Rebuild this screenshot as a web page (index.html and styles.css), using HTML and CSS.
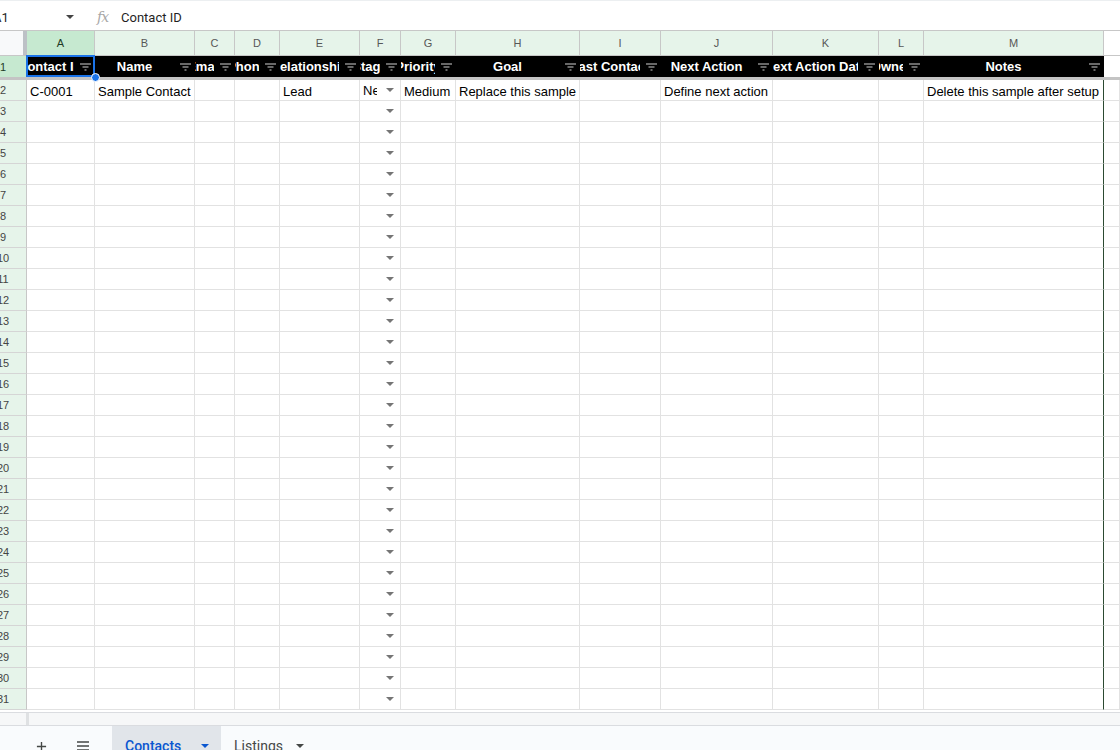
FILE: index.html
```html
<!DOCTYPE html>
<html>
<head>
<meta charset="utf-8">
<title>Contacts</title>
<link rel="stylesheet" href="styles.css">
</head>
<body>
<div class="app">
  <div class="fbar">
    <span class="namebox">A1</span>
    <i class="nb-caret"></i>
    <span class="fx">fx</span>
    <span class="formula">Contact ID</span>
  </div>

  <div class="sheet">
    <div class="row colhdr">
      <div class="corner"></div>
      <div class="ch sel-col">A</div><div class="ch">B</div><div class="ch">C</div><div class="ch">D</div><div class="ch">E</div><div class="ch">F</div><div class="ch">G</div><div class="ch">H</div><div class="ch">I</div><div class="ch">J</div><div class="ch">K</div><div class="ch">L</div><div class="ch">M</div><div class="ch blank"></div>
    </div>

    <div class="row hdr">
      <div class="rh sel-row">1</div>
      <div class="h sel"><span class="ht">Contact ID</span><svg class="fi" viewBox="0 0 11 8"><path d="M0 1h11M2.5 4h6M4.5 7h2"/></svg></div>
      <div class="h"><span class="ht">Name</span><svg class="fi" viewBox="0 0 11 8"><path d="M0 1h11M2.5 4h6M4.5 7h2"/></svg></div>
      <div class="h"><span class="ht">Email</span><svg class="fi" viewBox="0 0 11 8"><path d="M0 1h11M2.5 4h6M4.5 7h2"/></svg></div>
      <div class="h"><span class="ht">Phone</span><svg class="fi" viewBox="0 0 11 8"><path d="M0 1h11M2.5 4h6M4.5 7h2"/></svg></div>
      <div class="h"><span class="ht">Relationship</span><svg class="fi" viewBox="0 0 11 8"><path d="M0 1h11M2.5 4h6M4.5 7h2"/></svg></div>
      <div class="h"><span class="ht">Stage</span><svg class="fi" viewBox="0 0 11 8"><path d="M0 1h11M2.5 4h6M4.5 7h2"/></svg></div>
      <div class="h"><span class="ht">Priority</span><svg class="fi" viewBox="0 0 11 8"><path d="M0 1h11M2.5 4h6M4.5 7h2"/></svg></div>
      <div class="h"><span class="ht">Goal</span><svg class="fi" viewBox="0 0 11 8"><path d="M0 1h11M2.5 4h6M4.5 7h2"/></svg></div>
      <div class="h"><span class="ht">Last Contact</span><svg class="fi" viewBox="0 0 11 8"><path d="M0 1h11M2.5 4h6M4.5 7h2"/></svg></div>
      <div class="h"><span class="ht">Next Action</span><svg class="fi" viewBox="0 0 11 8"><path d="M0 1h11M2.5 4h6M4.5 7h2"/></svg></div>
      <div class="h"><span class="ht">Next Action Date</span><svg class="fi" viewBox="0 0 11 8"><path d="M0 1h11M2.5 4h6M4.5 7h2"/></svg></div>
      <div class="h"><span class="ht">Owner</span><svg class="fi" viewBox="0 0 11 8"><path d="M0 1h11M2.5 4h6M4.5 7h2"/></svg></div>
      <div class="h"><span class="ht">Notes</span><svg class="fi" viewBox="0 0 11 8"><path d="M0 1h11M2.5 4h6M4.5 7h2"/></svg></div>
      <div class="h blank"></div>
    </div>

    <div class="row"><div class="rh">2</div><div class="c">C-0001</div><div class="c">Sample Contact</div><div class="c"></div><div class="c"></div><div class="c">Lead</div><div class="c dd"><span class="dt">New</span></div><div class="c">Medium</div><div class="c">Replace this sample text</div><div class="c"></div><div class="c">Define next action</div><div class="c"></div><div class="c"></div><div class="c m">Delete this sample after setup</div><div class="c"></div></div>
    <div class="row"><div class="rh">3</div><div class="c"></div><div class="c"></div><div class="c"></div><div class="c"></div><div class="c"></div><div class="c dd"></div><div class="c"></div><div class="c"></div><div class="c"></div><div class="c"></div><div class="c"></div><div class="c"></div><div class="c m"></div><div class="c"></div></div>
    <div class="row"><div class="rh">4</div><div class="c"></div><div class="c"></div><div class="c"></div><div class="c"></div><div class="c"></div><div class="c dd"></div><div class="c"></div><div class="c"></div><div class="c"></div><div class="c"></div><div class="c"></div><div class="c"></div><div class="c m"></div><div class="c"></div></div>
    <div class="row"><div class="rh">5</div><div class="c"></div><div class="c"></div><div class="c"></div><div class="c"></div><div class="c"></div><div class="c dd"></div><div class="c"></div><div class="c"></div><div class="c"></div><div class="c"></div><div class="c"></div><div class="c"></div><div class="c m"></div><div class="c"></div></div>
    <div class="row"><div class="rh">6</div><div class="c"></div><div class="c"></div><div class="c"></div><div class="c"></div><div class="c"></div><div class="c dd"></div><div class="c"></div><div class="c"></div><div class="c"></div><div class="c"></div><div class="c"></div><div class="c"></div><div class="c m"></div><div class="c"></div></div>
    <div class="row"><div class="rh">7</div><div class="c"></div><div class="c"></div><div class="c"></div><div class="c"></div><div class="c"></div><div class="c dd"></div><div class="c"></div><div class="c"></div><div class="c"></div><div class="c"></div><div class="c"></div><div class="c"></div><div class="c m"></div><div class="c"></div></div>
    <div class="row"><div class="rh">8</div><div class="c"></div><div class="c"></div><div class="c"></div><div class="c"></div><div class="c"></div><div class="c dd"></div><div class="c"></div><div class="c"></div><div class="c"></div><div class="c"></div><div class="c"></div><div class="c"></div><div class="c m"></div><div class="c"></div></div>
    <div class="row"><div class="rh">9</div><div class="c"></div><div class="c"></div><div class="c"></div><div class="c"></div><div class="c"></div><div class="c dd"></div><div class="c"></div><div class="c"></div><div class="c"></div><div class="c"></div><div class="c"></div><div class="c"></div><div class="c m"></div><div class="c"></div></div>
    <div class="row"><div class="rh">10</div><div class="c"></div><div class="c"></div><div class="c"></div><div class="c"></div><div class="c"></div><div class="c dd"></div><div class="c"></div><div class="c"></div><div class="c"></div><div class="c"></div><div class="c"></div><div class="c"></div><div class="c m"></div><div class="c"></div></div>
    <div class="row"><div class="rh">11</div><div class="c"></div><div class="c"></div><div class="c"></div><div class="c"></div><div class="c"></div><div class="c dd"></div><div class="c"></div><div class="c"></div><div class="c"></div><div class="c"></div><div class="c"></div><div class="c"></div><div class="c m"></div><div class="c"></div></div>
    <div class="row"><div class="rh">12</div><div class="c"></div><div class="c"></div><div class="c"></div><div class="c"></div><div class="c"></div><div class="c dd"></div><div class="c"></div><div class="c"></div><div class="c"></div><div class="c"></div><div class="c"></div><div class="c"></div><div class="c m"></div><div class="c"></div></div>
    <div class="row"><div class="rh">13</div><div class="c"></div><div class="c"></div><div class="c"></div><div class="c"></div><div class="c"></div><div class="c dd"></div><div class="c"></div><div class="c"></div><div class="c"></div><div class="c"></div><div class="c"></div><div class="c"></div><div class="c m"></div><div class="c"></div></div>
    <div class="row"><div class="rh">14</div><div class="c"></div><div class="c"></div><div class="c"></div><div class="c"></div><div class="c"></div><div class="c dd"></div><div class="c"></div><div class="c"></div><div class="c"></div><div class="c"></div><div class="c"></div><div class="c"></div><div class="c m"></div><div class="c"></div></div>
    <div class="row"><div class="rh">15</div><div class="c"></div><div class="c"></div><div class="c"></div><div class="c"></div><div class="c"></div><div class="c dd"></div><div class="c"></div><div class="c"></div><div class="c"></div><div class="c"></div><div class="c"></div><div class="c"></div><div class="c m"></div><div class="c"></div></div>
    <div class="row"><div class="rh">16</div><div class="c"></div><div class="c"></div><div class="c"></div><div class="c"></div><div class="c"></div><div class="c dd"></div><div class="c"></div><div class="c"></div><div class="c"></div><div class="c"></div><div class="c"></div><div class="c"></div><div class="c m"></div><div class="c"></div></div>
    <div class="row"><div class="rh">17</div><div class="c"></div><div class="c"></div><div class="c"></div><div class="c"></div><div class="c"></div><div class="c dd"></div><div class="c"></div><div class="c"></div><div class="c"></div><div class="c"></div><div class="c"></div><div class="c"></div><div class="c m"></div><div class="c"></div></div>
    <div class="row"><div class="rh">18</div><div class="c"></div><div class="c"></div><div class="c"></div><div class="c"></div><div class="c"></div><div class="c dd"></div><div class="c"></div><div class="c"></div><div class="c"></div><div class="c"></div><div class="c"></div><div class="c"></div><div class="c m"></div><div class="c"></div></div>
    <div class="row"><div class="rh">19</div><div class="c"></div><div class="c"></div><div class="c"></div><div class="c"></div><div class="c"></div><div class="c dd"></div><div class="c"></div><div class="c"></div><div class="c"></div><div class="c"></div><div class="c"></div><div class="c"></div><div class="c m"></div><div class="c"></div></div>
    <div class="row"><div class="rh">20</div><div class="c"></div><div class="c"></div><div class="c"></div><div class="c"></div><div class="c"></div><div class="c dd"></div><div class="c"></div><div class="c"></div><div class="c"></div><div class="c"></div><div class="c"></div><div class="c"></div><div class="c m"></div><div class="c"></div></div>
    <div class="row"><div class="rh">21</div><div class="c"></div><div class="c"></div><div class="c"></div><div class="c"></div><div class="c"></div><div class="c dd"></div><div class="c"></div><div class="c"></div><div class="c"></div><div class="c"></div><div class="c"></div><div class="c"></div><div class="c m"></div><div class="c"></div></div>
    <div class="row"><div class="rh">22</div><div class="c"></div><div class="c"></div><div class="c"></div><div class="c"></div><div class="c"></div><div class="c dd"></div><div class="c"></div><div class="c"></div><div class="c"></div><div class="c"></div><div class="c"></div><div class="c"></div><div class="c m"></div><div class="c"></div></div>
    <div class="row"><div class="rh">23</div><div class="c"></div><div class="c"></div><div class="c"></div><div class="c"></div><div class="c"></div><div class="c dd"></div><div class="c"></div><div class="c"></div><div class="c"></div><div class="c"></div><div class="c"></div><div class="c"></div><div class="c m"></div><div class="c"></div></div>
    <div class="row"><div class="rh">24</div><div class="c"></div><div class="c"></div><div class="c"></div><div class="c"></div><div class="c"></div><div class="c dd"></div><div class="c"></div><div class="c"></div><div class="c"></div><div class="c"></div><div class="c"></div><div class="c"></div><div class="c m"></div><div class="c"></div></div>
    <div class="row"><div class="rh">25</div><div class="c"></div><div class="c"></div><div class="c"></div><div class="c"></div><div class="c"></div><div class="c dd"></div><div class="c"></div><div class="c"></div><div class="c"></div><div class="c"></div><div class="c"></div><div class="c"></div><div class="c m"></div><div class="c"></div></div>
    <div class="row"><div class="rh">26</div><div class="c"></div><div class="c"></div><div class="c"></div><div class="c"></div><div class="c"></div><div class="c dd"></div><div class="c"></div><div class="c"></div><div class="c"></div><div class="c"></div><div class="c"></div><div class="c"></div><div class="c m"></div><div class="c"></div></div>
    <div class="row"><div class="rh">27</div><div class="c"></div><div class="c"></div><div class="c"></div><div class="c"></div><div class="c"></div><div class="c dd"></div><div class="c"></div><div class="c"></div><div class="c"></div><div class="c"></div><div class="c"></div><div class="c"></div><div class="c m"></div><div class="c"></div></div>
    <div class="row"><div class="rh">28</div><div class="c"></div><div class="c"></div><div class="c"></div><div class="c"></div><div class="c"></div><div class="c dd"></div><div class="c"></div><div class="c"></div><div class="c"></div><div class="c"></div><div class="c"></div><div class="c"></div><div class="c m"></div><div class="c"></div></div>
    <div class="row"><div class="rh">29</div><div class="c"></div><div class="c"></div><div class="c"></div><div class="c"></div><div class="c"></div><div class="c dd"></div><div class="c"></div><div class="c"></div><div class="c"></div><div class="c"></div><div class="c"></div><div class="c"></div><div class="c m"></div><div class="c"></div></div>
    <div class="row"><div class="rh">30</div><div class="c"></div><div class="c"></div><div class="c"></div><div class="c"></div><div class="c"></div><div class="c dd"></div><div class="c"></div><div class="c"></div><div class="c"></div><div class="c"></div><div class="c"></div><div class="c"></div><div class="c m"></div><div class="c"></div></div>
    <div class="row"><div class="rh">31</div><div class="c"></div><div class="c"></div><div class="c"></div><div class="c"></div><div class="c"></div><div class="c dd"></div><div class="c"></div><div class="c"></div><div class="c"></div><div class="c"></div><div class="c"></div><div class="c"></div><div class="c m"></div><div class="c"></div></div>
  </div>

  <div class="hscroll"><span class="hs-handle"></span></div>

  <div class="tabs">
    <span class="tb-btn add"><svg viewBox="0 0 12 12"><path d="M6 1v10M1 6h10"/></svg></span>
    <span class="tb-btn list"><svg viewBox="0 0 14 10"><path d="M1 1h12M1 5h12M1 9h12"/></svg></span>
    <span class="tab active">Contacts<i class="tab-caret"></i></span>
    <span class="tab">Listings<i class="tab-caret"></i></span>
  </div>
</div>
</body>
</html>
```

FILE: styles.css
```css
html, body {
  margin: 0;
  padding: 0;
  background: #fff;
}

.app {
  width: 1120px;
  height: 750px;
  overflow: hidden;
  font-family: "Liberation Sans", Arial, sans-serif;
  color: #000;
}

/* formula bar */
.fbar {
  display: flex;
  align-items: center;
  box-sizing: border-box;
  height: 31px;
  padding-top: 3px;
  border-top: 1px solid #eceff1;
  border-bottom: 1px solid #c7c7c7;
  font-family: Roboto, "Liberation Sans", sans-serif;
  font-size: 13px;
  color: #1f1f1f;
}

.namebox {
  margin-left: -7px;
  width: 73px;
}

.nb-caret {
  width: 0;
  height: 0;
  border-left: 4px solid transparent;
  border-right: 4px solid transparent;
  border-top: 4px solid #444;
}

.fx {
  margin-left: 23px;
  width: 24px;
  font-family: "DejaVu Serif", serif;
  font-style: italic;
  font-size: 14px;
  color: #a8a8a8;
  letter-spacing: -1px;
}

/* grid */
.sheet {
  margin-left: -20px;
  width: 1140px;
}

.row {
  display: grid;
  grid-template-columns: 47px 68px 100px 40px 45px 80px 41px 55px 124px 81px 112px 106px 45px 180px 1fr;
  height: 21px;
}

.row > div {
  box-sizing: border-box;
  min-width: 0;
}

.colhdr {
  height: 25px;
}

.corner {
  background: #f8f9fa;
  border-right: 4px solid #bdc1c6;
  border-bottom: 1px solid #c7c7c7;
}

.ch {
  background: #e6f4ea;
  border-right: 1px solid #c7c7c7;
  border-bottom: 1px solid #c7c7c7;
  display: flex;
  align-items: center;
  justify-content: center;
  font-size: 11px;
  color: #575757;
}

.ch.sel-col {
  background: #c6e9d0;
  color: #1f3b26;
}

.ch.blank {
  background: #fff;
  border-right: none;
}

/* frozen header row */
.hdr {
  height: 24px;
  border-bottom: 3px solid #c4c4c4;
  box-sizing: border-box;
}

.rh {
  background: #e6f4ea;
  border-right: 1px solid #c7c7c7;
  border-bottom: 1px solid #d5d5d5;
  display: flex;
  align-items: center;
  justify-content: center;
  font-size: 11px;
  color: #444;
}

.hdr .rh {
  border-bottom: none;
}

.rh.sel-row {
  background: #c6e9d0;
  color: #1f3b26;
}

.h {
  background: #000;
  color: #fff;
  font-weight: bold;
  font-size: 13px;
  display: flex;
  align-items: center;
  padding-right: 4px;
  position: relative;
}

.ht {
  flex: 1;
  min-width: 0;
  overflow: hidden;
  white-space: nowrap;
  display: flex;
  justify-content: center;
}

.fi {
  width: 11px;
  height: 8px;
  margin-left: 6px;
  flex: none;
  fill: none;
  stroke: #d0d0d0;
  stroke-width: 1.2;
}

.h.blank {
  background: #fff;
}

/* active cell A1 */
.h.sel::before {
  content: "";
  position: absolute;
  left: -1px;
  top: -1px;
  right: 0;
  bottom: 0;
  border: 2px solid #1a73e8;
}

.h.sel::after {
  content: "";
  position: absolute;
  right: -5px;
  bottom: -5px;
  width: 7px;
  height: 7px;
  border-radius: 50%;
  background: #1a73e8;
  border: 1px solid #fff;
  z-index: 2;
}

/* body cells */
.c {
  border-right: 1px solid #e2e2e2;
  border-bottom: 1px solid #e2e2e2;
  font-size: 13px;
  line-height: 19px;
  padding: 2px 3px 0;
  white-space: nowrap;
  overflow: hidden;
}

.c.m {
  border-right: 1px solid #2c4a32;
}

.c.dd {
  display: flex;
  align-items: center;
  padding-top: 0;
  padding-right: 6px;
}

.dt {
  flex: 1;
  min-width: 0;
  overflow: hidden;
  margin-right: 9px;
  padding-top: 1px;
}

.c.dd::after {
  content: "";
  margin-left: auto;
  flex: none;
  width: 0;
  height: 0;
  border-left: 4px solid transparent;
  border-right: 4px solid transparent;
  border-top: 4px solid #757575;
}

/* horizontal scroll strip */
.hscroll {
  margin-top: 2px;
  height: 12px;
  border-top: 1px solid #dadce0;
  background: #f6f7f8;
  display: flex;
  padding-left: 26px;
}

.hs-handle {
  width: 3px;
  background: #dfe1e3;
}

/* sheet tabs */
.tabs {
  display: flex;
  align-items: center;
  height: 40px;
  border-top: 1px solid #dadce0;
  background: #f9fbfd;
  font-family: Roboto, "Liberation Sans", sans-serif;
  font-size: 14px;
  color: #444746;
}

.tb-btn {
  display: flex;
  align-items: center;
  justify-content: center;
}

.tb-btn svg {
  fill: none;
  stroke: #444746;
  stroke-width: 1.5;
}

.tb-btn.add {
  margin-left: 35px;
  width: 12px;
}

.tb-btn.add svg {
  width: 11px;
  height: 11px;
}

.tb-btn.list {
  margin-left: 29px;
  width: 14px;
}

.tb-btn.list svg {
  width: 14px;
  height: 10px;
}

.tab {
  display: flex;
  align-items: center;
  height: 40px;
  padding: 0 12px 0 13px;
  box-sizing: border-box;
}

.tab.active {
  margin-left: 22px;
  width: 109px;
  background: #e1e5ea;
  color: #0b57d0;
  font-weight: 500;
}

.tab-caret {
  margin-left: auto;
  width: 0;
  height: 0;
  border-left: 4px solid transparent;
  border-right: 4px solid transparent;
  border-top: 4px solid currentColor;
}

.tab:not(.active) .tab-caret {
  margin-left: 13px;
  border-top-color: #444746;
}
```
